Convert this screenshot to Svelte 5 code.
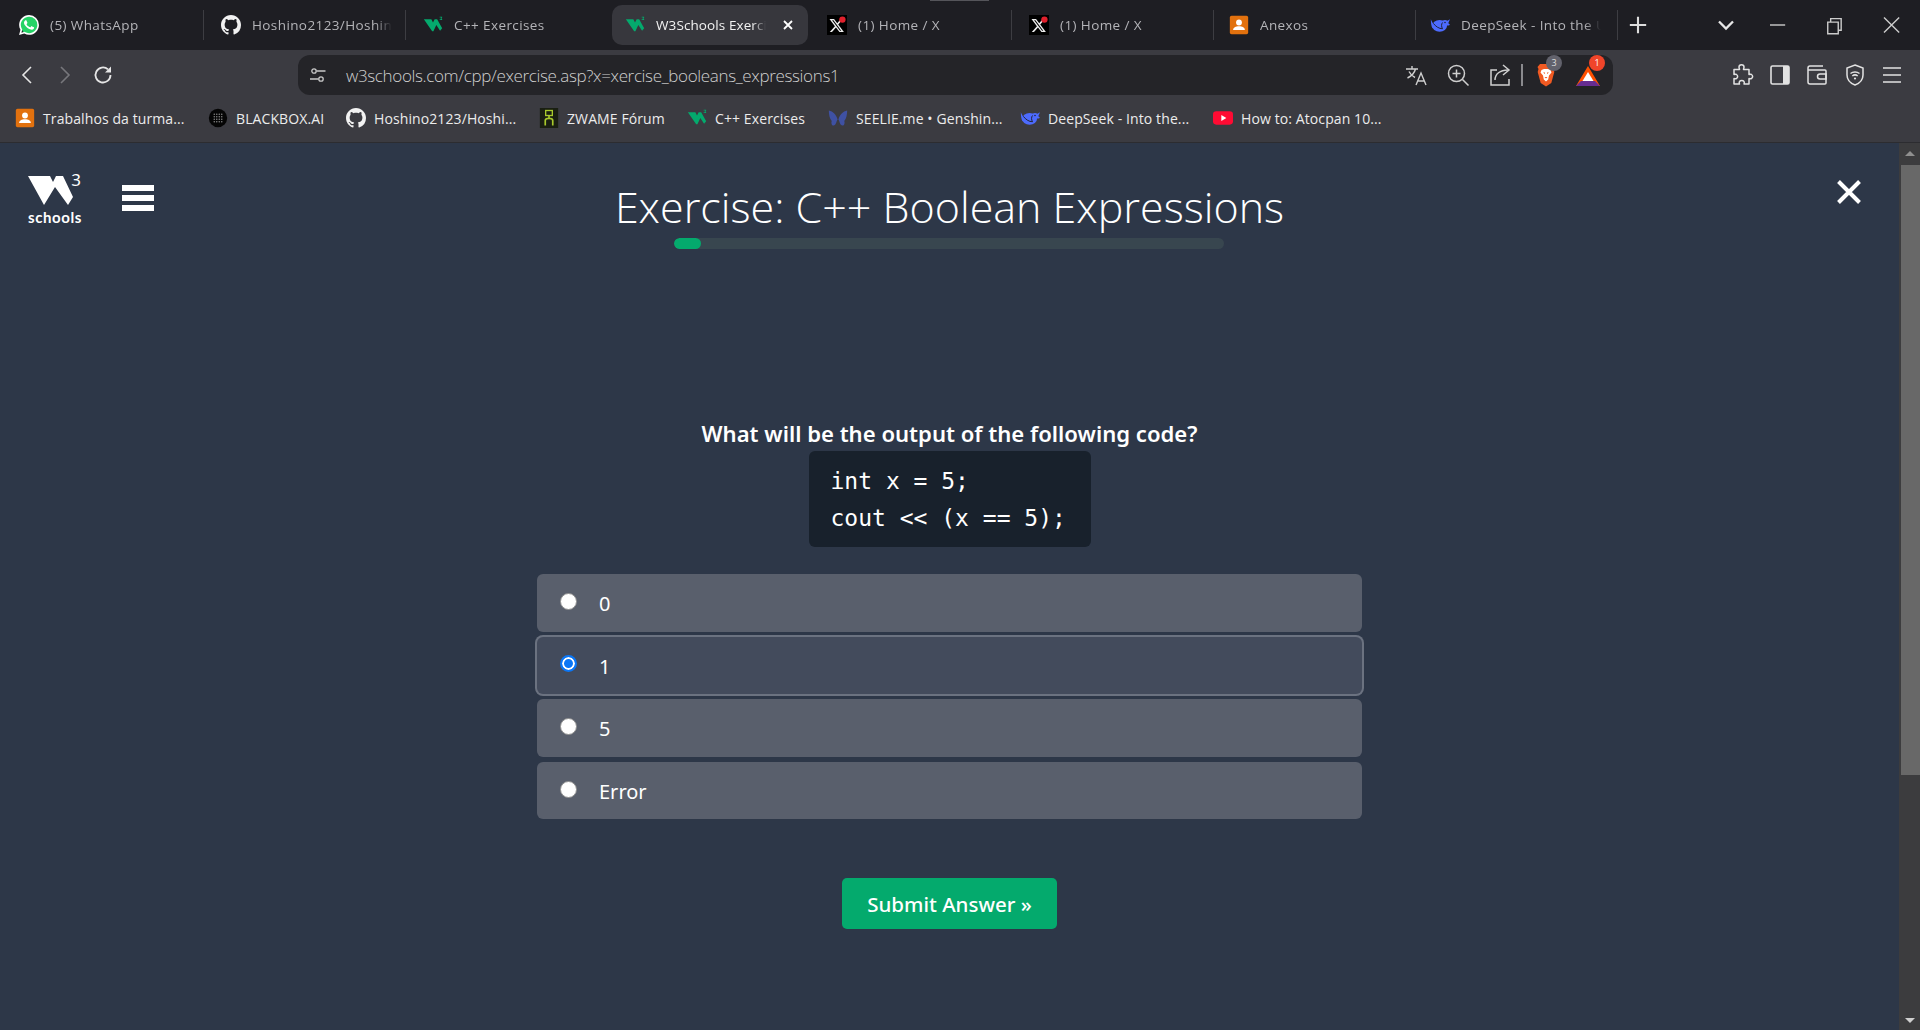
<script>
	const ghPath = 'M8 0C3.58 0 0 3.58 0 8c0 3.54 2.29 6.53 5.47 7.59.4.07.55-.17.55-.38 0-.19-.01-.82-.01-1.49-2.01.37-2.53-.49-2.69-.94-.09-.23-.48-.94-.82-1.13-.28-.15-.68-.52-.01-.53.63-.01 1.08.58 1.23.82.72 1.21 1.87.87 2.33.66.07-.52.28-.87.51-1.07-1.78-.2-3.64-.89-3.64-3.95 0-.87.31-1.59.82-2.15-.08-.2-.36-1.02.08-2.12 0 0 .67-.21 2.2.82.64-.18 1.32-.27 2-.27.68 0 1.36.09 2 .27 1.53-1.04 2.2-.82 2.2-.82.44 1.1.16 1.92.08 2.12.51.56.82 1.27.82 2.15 0 3.07-1.87 3.75-3.65 3.95.29.25.54.73.54 1.48 0 1.07-.01 1.93-.01 2.2 0 .21.15.46.55.38A8.013 8.013 0 0016 8c0-4.42-3.58-8-8-8z';

	const tabs = [
		{ icon: 'whatsapp', title: '(5) WhatsApp', sep: true, pad: 16 },
		{ icon: 'github', title: 'Hoshino2123/Hoshino2123', sep: true, pad: 16 },
		{ icon: 'w3', title: 'C++ Exercises', pad: 16 },
		{ icon: 'w3', title: 'W3Schools Exercises', active: true, pad: 13 },
		{ icon: 'x', title: '(1) Home / X', sep: true, pad: 16 },
		{ icon: 'x', title: '(1) Home / X', sep: true, pad: 16 },
		{ icon: 'classroom', title: 'Anexos', sep: true, pad: 14 },
		{ icon: 'deepseek', title: 'DeepSeek - Into the Unknown', sep: true, pad: 13 }
	];

	const bookmarks = [
		{ icon: 'classroom', label: 'Trabalhos da turma...', w: 193 },
		{ icon: 'blackbox', label: 'BLACKBOX.AI', w: 138 },
		{ icon: 'github', label: 'Hoshino2123/Hoshi...', w: 193 },
		{ icon: 'zwame', label: 'ZWAME Fórum', w: 148 },
		{ icon: 'w3', label: 'C++ Exercises', w: 141 },
		{ icon: 'seelie', label: 'SEELIE.me • Genshin...', w: 192 },
		{ icon: 'deepseek', label: 'DeepSeek - Into the...', w: 193 },
		{ icon: 'youtube', label: 'How to: Atocpan 10...', w: 180 }
	];

	const answers = ['0', '1', '5', 'Error'];
	let picked = $state('1');
</script>

{#snippet favicon(name)}
	<svg class="fav" viewBox="0 0 24 24" aria-hidden="true">
		{#if name === 'whatsapp'}
			<circle cx="12" cy="12" r="10.5" fill="#25d366" />
			<path fill="#fff" d="M17.472 14.382c-.297-.149-1.758-.867-2.03-.967-.273-.099-.471-.148-.67.15-.197.297-.767.966-.94 1.164-.173.199-.347.223-.644.075-.297-.15-1.255-.463-2.39-1.475-.883-.788-1.48-1.761-1.653-2.059-.173-.297-.018-.458.13-.606.134-.133.298-.347.446-.52.149-.174.198-.298.298-.497.099-.198.05-.371-.025-.52-.075-.149-.669-1.612-.916-2.207-.242-.579-.487-.5-.669-.51-.173-.008-.371-.01-.57-.01-.198 0-.52.074-.792.372-.272.297-1.04 1.016-1.04 2.479 0 1.462 1.065 2.875 1.213 3.074.149.198 2.096 3.2 5.077 4.487.709.306 1.262.489 1.694.625.712.227 1.36.195 1.871.118.571-.085 1.758-.719 2.006-1.413.248-.694.248-1.289.173-1.413-.074-.124-.272-.198-.57-.347m-5.421 7.403h-.004a9.87 9.87 0 01-5.031-1.378l-.361-.214-3.741.982.998-3.648-.235-.374a9.86 9.86 0 01-1.51-5.26c.001-5.45 4.436-9.884 9.888-9.884 2.64 0 5.122 1.03 6.988 2.898a9.825 9.825 0 012.893 6.994c-.003 5.45-4.437 9.884-9.885 9.884m8.413-18.297A11.815 11.815 0 0012.05 0C5.495 0 .16 5.335.157 11.892c0 2.096.547 4.142 1.588 5.945L.057 24l6.305-1.654a11.882 11.882 0 005.683 1.448h.005c6.554 0 11.89-5.335 11.893-11.893a11.821 11.821 0 00-3.48-8.413z" />
		{:else if name === 'github'}
			<path fill="#f2f2f2" transform="scale(1.5)" d={ghPath} />
		{:else if name === 'w3'}
			<path fill="#04aa6d" d="M1 5h9l2 4 2-4h3l6 11-2.500 3-4.500-7-3.500 7.500h-1.500z" />
			<path fill="#04aa6d" d="M20 2h3v1l-1 1 1 1v1h-3v-1h2l-1-1 1-1h-2z" />
		{:else if name === 'x'}
			<rect width="24" height="24" fill="#000" />
			<path fill="#eee" transform="translate(3 4) scale(.72)" d="M18.901 1.153h3.68l-8.04 9.19L24 22.846h-7.406l-5.8-7.584-6.638 7.584H.474l8.6-9.83L0 1.154h7.594l5.243 6.932ZM17.61 20.644h2.039L6.486 3.24H4.298Z" />
			<circle cx="18.500" cy="5.500" r="3.800" fill="#e0202c" />
		{:else if name === 'classroom'}
			<rect x="1" y="1" width="22" height="22" rx="2" fill="#e2710e" />
			<circle cx="12" cy="9" r="3.500" fill="#fff" />
			<path fill="#fff" d="M5 18c0-3 3-4.500 7-4.500s7 1.500 7 4.500z" />
		{:else if name === 'deepseek'}
			<ellipse cx="11.500" cy="13" rx="9" ry="7" fill="#4d6bfe" />
			<path fill="#4d6bfe" d="M1 5c1 3 3 6 6 8l-4 3c-1.500-3-2-7-2-11zM15 7c2-1.500 4-1.500 6 0l3-2-2 4.500c.5 1 1 1.500 2 1.500-.5 1.500-2 2-3.500 1.500L17 14z" />
			<path fill="none" stroke="#1e1e23" stroke-width="1.100" d="M4 10c3 4 7 6.500 11 6.500-1.500-2.500-1.500-5.500 0-7.500" />
			<circle cx="18" cy="9" r="0.900" fill="#1e1e23" />
		{:else if name === 'blackbox'}
			<circle cx="12" cy="12" r="11" fill="#050505" />
			<g fill="#8a8a8a">
				{#each [7, 10, 13, 16] as px}
					{#each [7, 10, 13, 16] as py}
						<circle cx={px + 0.500} cy={py + 0.500} r="0.900" />
					{/each}
				{/each}
			</g>
		{:else if name === 'zwame'}
			<rect x="1" width="22" height="24" fill="#1a1f12" />
			<rect x="8" y="3" width="8" height="6" fill="none" stroke="#a8c92c" stroke-width="1.600" />
			<path d="M12 9v3M7.500 21v-6c0-1.500 1-2.500 4.500-2.500s4.500 1 4.500 2.500v6" fill="none" stroke="#a8c92c" stroke-width="2" />
		{:else if name === 'seelie'}
			<path fill="#3f51a3" d="M1 3c5 1 9 5 10.500 11-1-.5-1.500 7-5 7-2 0-3-3-2-5.500C2 13 1 8 1 3zM23 3c-5 1-9 5-10.500 11 1-.5 1.500 7 5 7 2 0 3-3 2-5.500C22 13 23 8 23 3z" />
		{:else if name === 'youtube'}
			<rect y="4" width="24" height="16" rx="4" fill="#ff0b33" />
			<path fill="#fff" d="M10 8.500v7l6-3.500z" />
		{/if}
	</svg>
{/snippet}

<div class="browser">
	<div class="strip">
		<span class="grip"></span>
		<div class="tabs">
			{#each tabs as tab}
				<div class="tab" class:active={tab.active} class:sep={tab.sep} style="padding-left:{tab.pad}px">
					{@render favicon(tab.icon)}
					<span class="title">{tab.title}</span>
					{#if tab.active}
						<svg class="tab-x" viewBox="0 0 12 12"><path d="M2 2l8 8M10 2l-8 8" stroke="#fff" stroke-width="1.800" /></svg>
					{/if}
				</div>
			{/each}
		</div>
		<svg class="ctl plus" viewBox="0 0 24 24"><path d="M12 5v14M5 12h14" stroke="#ddd" stroke-width="1.800" /></svg>
		<svg class="ctl chev" viewBox="0 0 24 24"><path d="M6 9l6 6 6-6" fill="none" stroke="#e6e6e6" stroke-width="2" /></svg>
		<svg class="ctl min" viewBox="0 0 24 24"><path d="M6 12h13" stroke="#ccc" stroke-width="1.200" /></svg>
		<svg class="ctl rest" viewBox="0 0 24 24"><path d="M7.500 9.500h9v10h-9zM10 9.500V6.500h9v10h-2.500" fill="none" stroke="#ccc" stroke-width="1.200" /></svg>
		<svg class="ctl close" viewBox="0 0 24 24"><path d="M6 5.500l13 13M19 5.500l-13 13" stroke="#ccc" stroke-width="1.200" /></svg>
	</div>

	<div class="toolbar">
		<svg class="tb" viewBox="0 0 24 24"><path d="M16 4l-8 8 8 8" fill="none" stroke="#e6e6e6" stroke-width="1.600" /></svg>
		<svg class="tb" viewBox="0 0 24 24"><path d="M8 4l8 8-8 8" fill="none" stroke="#77777c" stroke-width="1.600" /></svg>
		<svg class="tb" viewBox="0 0 24 24"><path d="M19.500 12a7.500 7.500 0 1 1-2.500-5.600" fill="none" stroke="#e6e6e6" stroke-width="1.800" /><path d="M20 3.500v6h-6z" fill="#e6e6e6" /></svg>
		<div class="omni">
			<svg class="tune" viewBox="0 0 20 20"><g fill="none" stroke="#c8c8c8" stroke-width="1.300"><circle cx="6" cy="6" r="2.200" /><path d="M8.500 6h9M2 14h8.500" /><circle cx="13" cy="14" r="2.200" /></g></svg>
			<span class="url">w3schools.com/cpp/exercise.asp?x=xercise_booleans_expressions1</span>
			<svg class="oi" viewBox="0 0 24 24"><g fill="none" stroke="#cfcfcf" stroke-width="1.400"><path d="M2 6h12M8 3v3M11.500 6c-1 4-4 7-8 9M5 8.500c1.500 3 4 5 6 6" /><path d="M12 22l5-12 5 12M13.800 18h6.400" /></g></svg>
			<svg class="oi" viewBox="0 0 24 24"><g fill="none" stroke="#cfcfcf" stroke-width="1.500"><circle cx="10.500" cy="10.500" r="8" /><path d="M16.500 16.500l6 6M10.500 6.500v8M6.500 10.500h8" /></g></svg>
			<svg class="oi" viewBox="0 0 24 24"><g fill="none" stroke="#cfcfcf" stroke-width="1.500"><path d="M9 7H3v15h18v-6" /><path d="M7 17c0-6 5-10 13-10" /><path d="M15 2l6 5-6 5" /></g></svg>
			<span class="divider"></span>
			<span class="oi brave">
				<svg viewBox="0 0 24 24">
					<path fill="#f15a22" d="M6 1h12l2.500 3-1 2 .8 3-3 11L12 23.500 6.700 20l-3-11 .8-3-1-2z" />
					<path fill="#fff" d="M7.500 7l2.500-1h4l2.500 1 1 2.500-2.500 3-.8 4-2.200 2-2.200-2-.8-4-2.500-3z" />
					<path fill="#f15a22" d="M9 9.500h2v1.500zM15 9.500h-2v1.500zM10.500 14h3l-1.500 1.500z" />
				</svg>
				<span class="badge grey">3</span>
			</span>
			<span class="oi bat">
				<svg viewBox="0 0 24 24">
					<path fill="#ff5000" d="M12 3L0 23h6l6-10 6 10h6z" />
					<path fill="#662d91" d="M0 23l5-5h14l5 5z" />
					<path fill="#fff" d="M12 9l5.500 9h-11z" />
				</svg>
				<span class="badge red">1</span>
			</span>
		</div>
		<div class="exts">
			<svg class="tb2" viewBox="0 0 24 24"><path fill="none" stroke="#e2e2e2" stroke-width="1.500" stroke-linejoin="round" d="M9 4c0-3 5-3 5 0 0 1-.5 1.500-.5 2.500H19v5c1-.5 1.500-.5 2.500 0 1.500 1 1.500 3 0 4-1 .5-1.500.5-2.500 0V21h-5c.5-1 .5-1.500 0-2.500-1-1.500-3.500-1.500-4.500 0-.5 1-.5 1.500 0 2.500H4v-5.500c1 .5 1.500.5 2.500 0 1.500-1 1.500-3 0-4-1-.5-1.500-.5-2.500 0V6.500h5.500C9.500 5.500 9 5 9 4z" /></svg>
			<svg class="tb2" viewBox="0 0 24 24"><rect x="3" y="3" width="18" height="18" rx="1.500" fill="none" stroke="#e2e2e2" stroke-width="1.600" /><rect x="15" y="3" width="6" height="18" fill="#e2e2e2" /></svg>
			<svg class="tb2" viewBox="0 0 24 24"><g fill="none" stroke="#e2e2e2" stroke-width="1.500"><path d="M18 3H5a2 2 0 0 0-2 2v14a2 2 0 0 0 2 2h15a1 1 0 0 0 1-1V8a1 1 0 0 0-1-1H3" /><path d="M21 11h-6a2.500 2.500 0 0 0 0 5h6z" /></g></svg>
			<svg class="tb2" viewBox="0 0 24 24"><g fill="none" stroke="#e2e2e2" stroke-width="1.500"><path d="M12 2l8 3v7c0 5-4 8.500-8 10-4-1.500-8-5-8-10V5z" /><path d="M7.500 10.500c2.500-2 6.500-2 9 0M9.300 13c1.500-1.200 4-1.200 5.400 0" /></g><circle cx="12" cy="15.500" r="1.100" fill="#e2e2e2" /></svg>
			<svg class="tb2" viewBox="0 0 24 24"><path d="M3 5h18M3 12h18M3 19h18" stroke="#e2e2e2" stroke-width="1.600" /></svg>
		</div>
	</div>

	<div class="bookmarks">
		{#each bookmarks as b}
			<div class="bm" style="width:{b.w}px">
				{@render favicon(b.icon)}
				<span>{b.label}</span>
			</div>
		{/each}
	</div>

	<div class="page">
		<main>
			<header>
				<div class="brand">
					<div class="logo">
						<svg viewBox="28 172 54 34" width="54" height="34" aria-hidden="true">
							<path fill="#fff" d="M28 176h22l3 6 3-6h7l10 21-5 8-13-18-11 18z" />
						</svg>
						<span class="three">3</span>
						<span class="schools">schools</span>
					</div>
					<div class="burger"><i></i><i></i><i></i></div>
				</div>
				<div class="heading">
					<h1>Exercise: C++ Boolean Expressions</h1>
					<div class="progress"><div class="fill"></div></div>
				</div>
				<div class="dismiss">
					<svg viewBox="0 0 26 26" width="26" height="26"><path d="M2.500 2.500l21 21M23.500 2.500l-21 21" stroke="#fff" stroke-width="4" /></svg>
				</div>
			</header>

			<p class="question">What will be the output of the following code?</p>
			<pre class="code">int x = 5;
cout &lt;&lt; (x == 5);</pre>

			<div class="answers">
				{#each answers as a}
					<button class="answer" class:on={picked === a} onclick={() => (picked = a)}>
						<span class="dot"></span>
						<span class="label">{a}</span>
					</button>
				{/each}
			</div>

			<button class="submit">Submit Answer »</button>
		</main>
		<div class="scrollbar">
			<span class="arrow up"></span>
			<div class="thumb"></div>
			<span class="arrow down"></span>
		</div>
	</div>
</div>

<style>
	:global(body) {
		margin: 0;
		background: #2d3748;
	}

	.browser {
		width: 1920px;
		height: 1030px;
		display: flex;
		flex-direction: column;
		overflow: hidden;
		font-family: 'Open Sans', 'Noto Sans', sans-serif;
	}

	.strip {
		position: relative;
		height: 50px;
		flex: none;
		display: flex;
		align-items: center;
		background: #1e1e23;
	}

	.grip {
		position: absolute;
		left: 930px;
		top: 0;
		width: 59px;
		height: 1px;
		background: #55555a;
	}

	.tabs {
		display: flex;
		margin-left: 3px;
	}

	.tab {
		position: relative;
		width: 202px;
		height: 40px;
		box-sizing: border-box;
		display: flex;
		align-items: center;
		gap: 11px;
		color: #b4b4b8;
		font-size: 13.500px;
		letter-spacing: 0.4px;
	}

	.tab.sep::after {
		content: '';
		position: absolute;
		right: 1px;
		top: 5px;
		height: 30px;
		width: 1px;
		background: #3d3d42;
	}

	.tab.active {
		width: 196px;
		margin: 0 3px;
		background: #37373d;
		border-radius: 10px;
		color: #f2f2f2;
		letter-spacing: 0.1px;
	}

	.title {
		width: 140px;
		white-space: nowrap;
		overflow: hidden;
		mask-image: linear-gradient(to right, #000 88%, transparent);
	}

	.tab.active .title {
		width: 110px;
	}

	.tab-x {
		width: 12px;
		height: 12px;
		position: absolute;
		right: 14px;
	}

	.fav {
		width: 20px;
		height: 20px;
		flex: none;
	}

	.ctl {
		width: 28px;
		height: 28px;
		flex: none;
	}

	.plus {
		margin-left: 5px;
	}

	.chev {
		margin-left: 60px;
	}

	.min {
		margin-left: 23px;
	}

	.rest {
		margin-left: 28px;
	}

	.close {
		margin-left: 30px;
	}

	.toolbar {
		height: 50px;
		flex: none;
		display: flex;
		align-items: center;
		padding-left: 8px;
		background: #3b3b41;
	}

	.tb {
		width: 38px;
		height: 24px;
		flex: none;
	}

	.omni {
		width: 1315px;
		height: 40px;
		margin-left: 176px;
		box-sizing: border-box;
		padding: 0 13px 0 10px;
		display: flex;
		align-items: center;
		background: #242428;
		border-radius: 12px;
	}

	.tune {
		width: 20px;
		height: 20px;
		flex: none;
	}

	.url {
		flex: 1;
		margin-left: 18px;
		color: #cfcfcf;
		font-size: 17px;
		font-weight: 300;
		letter-spacing: -0.35px;
		white-space: nowrap;
	}

	.oi {
		position: relative;
		width: 24px;
		height: 24px;
		margin-left: 18px;
		flex: none;
		display: block;
	}

	.oi svg {
		width: 24px;
		height: 24px;
		display: block;
	}

	.divider {
		width: 2px;
		height: 22px;
		margin-left: 9px;
		background: #8a8a8e;
	}

	.oi.brave {
		margin-left: 11px;
	}

	.badge {
		position: absolute;
		top: -8px;
		left: 12px;
		width: 16px;
		height: 16px;
		border-radius: 50%;
		font-size: 9px;
		line-height: 16px;
		text-align: center;
		color: #ddd;
	}

	.grey {
		background: #62626c;
	}

	.red {
		left: 13px;
		background: #f0452a;
		color: #fff;
	}

	.exts {
		margin-left: 117px;
		display: flex;
		gap: 13.500px;
	}

	.tb2 {
		width: 24px;
		height: 24px;
		flex: none;
	}

	.bookmarks {
		height: 43px;
		flex: none;
		display: flex;
		align-items: center;
		box-sizing: border-box;
		padding: 0 0 6px 15px;
		background: #3b3b41;
		border-bottom: 1px solid #2c2c30;
	}

	.bm {
		display: flex;
		align-items: center;
		gap: 8px;
		flex: none;
		color: #ececec;
		font-size: 14px;
		letter-spacing: 0.1px;
		white-space: nowrap;
	}

	.page {
		flex: 1;
		display: flex;
		min-height: 0;
		background: #2d3748;
	}

	main {
		flex: 1;
		display: flex;
		flex-direction: column;
		align-items: center;
		color: #fff;
	}

	header {
		width: 100%;
		display: grid;
		grid-template-columns: 1fr auto 1fr;
	}

	.brand {
		display: flex;
		padding: 29px 0 0 28px;
		align-items: flex-start;
		gap: 41px;
	}

	.logo {
		position: relative;
		width: 53px;
		display: flex;
		flex-direction: column;
	}

	.logo svg {
		display: block;
		margin-top: 0;
	}

	.three {
		position: absolute;
		right: 0;
		top: -1px;
		font-size: 17px;
		line-height: 17px;
		font-family: 'Noto Sans', sans-serif;
	}

	.schools {
		font-size: 15px;
		line-height: 16px;
		margin-top: 3px;
		font-weight: 700;
		letter-spacing: 0.6px;
		font-family: 'Lato', sans-serif;
	}

	.burger {
		width: 32px;
		margin-top: 13px;
		display: flex;
		flex-direction: column;
		gap: 4px;
	}

	.burger i {
		height: 6px;
		background: #fff;
	}

	.heading {
		padding-top: 39px;
		display: flex;
		flex-direction: column;
		align-items: center;
	}

	h1 {
		margin: 0;
		font-size: 43px;
		line-height: 50px;
		font-weight: 300;
	}

	.progress {
		width: 550px;
		height: 11px;
		margin-top: 6px;
		border-radius: 6px;
		background: #38464f;
		overflow: hidden;
	}

	.fill {
		width: 27px;
		height: 100%;
		border-radius: 6px;
		background: #04aa6d;
	}

	.dismiss {
		display: flex;
		justify-content: flex-end;
		padding: 36px 37px 0 0;
	}

	.question {
		margin: 169px 0 0;
		font-family: 'Noto Sans', sans-serif;
		font-size: 22.100px;
		line-height: 30px;
		font-weight: 600;
	}

	.code {
		margin: 3px 0 0;
		width: 282px;
		height: 96px;
		box-sizing: border-box;
		padding: 12px 0 0 22px;
		background: #18212c;
		border-radius: 6px;
		font-family: 'DejaVu Sans Mono', monospace;
		font-size: 23px;
		line-height: 37px;
		color: #fff;
	}

	.answers {
		margin-top: 27px;
		width: 825px;
		display: flex;
		flex-direction: column;
		gap: 5px;
	}

	.answer {
		height: 57.600px;
		padding: 0 0 0 23px;
		display: flex;
		align-items: center;
		border: 0;
		border-radius: 6px;
		background: #595f6c;
		color: #fff;
		font: 400 20px 'Noto Sans', sans-serif;
		text-align: left;
		cursor: pointer;
	}

	.answer.on {
		background: #434b5c;
		box-shadow: 0 0 0 2px #6b7280;
	}

	.dot {
		width: 17px;
		height: 17px;
		box-sizing: border-box;
		margin-top: -3px;
		border-radius: 50%;
		background: #fff;
		border: 1px solid #8f8f8f;
		flex: none;
	}

	.on .dot {
		background: #0b76f5;
		border: 2px solid #0b76f5;
		box-shadow: inset 0 0 0 2px #fff;
	}

	.label {
		margin: 2px 0 0 22px;
	}

	.submit {
		margin-top: 59px;
		width: 215px;
		height: 51px;
		border: 0;
		border-radius: 5px;
		background: #04aa6d;
		color: #fff;
		font: 500 20.500px 'Noto Sans', sans-serif;
		cursor: pointer;
	}

	.scrollbar {
		width: 21px;
		flex: none;
		display: flex;
		flex-direction: column;
		align-items: center;
		background: #3c3c3e;
	}

	.arrow {
		width: 0;
		height: 0;
		border-left: 5px solid transparent;
		border-right: 5px solid transparent;
		flex: none;
	}

	.up {
		margin-top: 8px;
		border-bottom: 5px solid #8f8f8f;
	}

	.thumb {
		width: 19px;
		margin: 9px 0 0 2px;
		height: 610px;
		flex: none;
		background: #686868;
	}

	.down {
		margin-top: auto;
		margin-bottom: 7px;
		border-top: 5px solid #cfcfcf;
	}
</style>
